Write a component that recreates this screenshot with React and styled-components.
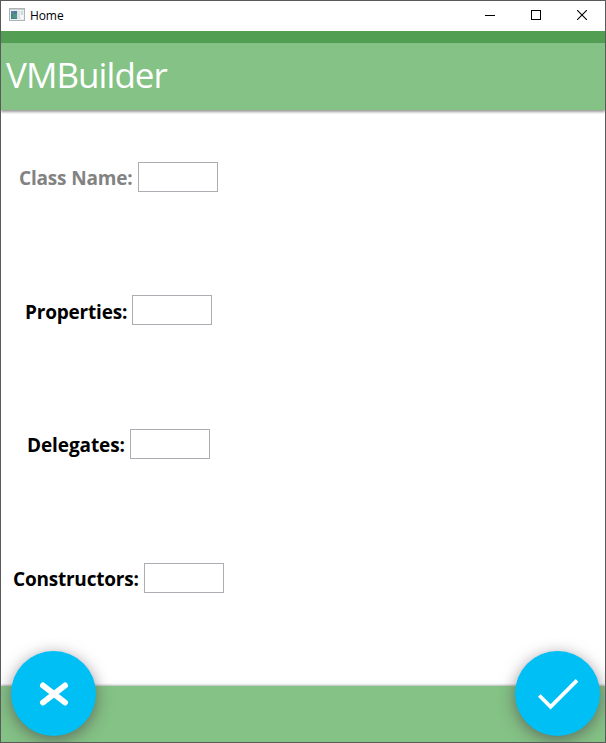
import React from "react";
import styled, { createGlobalStyle } from "styled-components";

const GlobalStyle = createGlobalStyle`
  * { box-sizing: border-box; }
  body { margin: 0; background: #fff; overflow: hidden; }
`;

const Window = styled.div`
  width: 606px;
  height: 743px;
  border: 1px solid #5b595c;
  background: #fff;
  display: flex;
  flex-direction: column;
  overflow: hidden;
  font-family: "Open Sans", "Noto Sans", sans-serif;
`;

const TitleBar = styled.div`
  height: 30px;
  flex: none;
  display: flex;
  align-items: center;
  padding-left: 8px;

  > svg { margin-bottom: 2px; }
`;

const WindowTitle = styled.span`
  flex: 1;
  margin-left: 5px;
  font-size: 12px;
  line-height: 16px;
  letter-spacing: -0.1px;
  color: #000;
`;

const CaptionButton = styled.button`
  width: 46px;
  height: 30px;
  flex: none;
  padding: 0 0 2px;
  border: 0;
  background: transparent;
  display: flex;
  align-items: center;
  justify-content: center;
`;

const StatusStrip = styled.div`
  height: 12px;
  flex: none;
  background: #529e53;
`;

const Header = styled.header`
  height: 67px;
  flex: none;
  display: flex;
  align-items: center;
  padding: 0 0 3px 5px;
  background: #84c285;
  box-shadow: 0 1.5px 2.5px rgba(0, 0, 0, 0.4);
`;

const AppName = styled.h1`
  margin: 0;
  font-size: 35px;
  font-weight: 400;
  line-height: 48px;
  letter-spacing: -0.95px;
  color: #fff;
`;

const Form = styled.main`
  flex: 1;
  width: 235px;
  display: grid;
  grid-template-rows: repeat(4, 133.6px);
`;

const Field = styled.label`
  display: flex;
  align-items: center;
  justify-content: center;
  color: ${(p) => (p.$muted ? "#828282" : "#000")};
`;

const FieldName = styled.span`
  width: ${(p) => p.$width}px;
  padding-top: ${(p) => p.$drop || 2}px;
  font-size: 19px;
  font-weight: 700;
  line-height: 28px;
  letter-spacing: ${(p) => p.$tracking}px;
  white-space: nowrap;
`;

const TextBox = styled.input`
  width: 80px;
  height: 30px;
  flex: none;
  padding: 0 4px;
  border: 1px solid #abadb3;
  border-radius: 0;
  outline: 0;
  background: #fff;
`;

const Footer = styled.footer`
  height: 56px;
  flex: none;
  display: flex;
  align-items: flex-end;
  justify-content: space-between;
  padding: 0 5px 6px 10px;
  background: #84c285;
  box-shadow: 0 -1px 2px rgba(0, 0, 0, 0.3);
`;

const RoundButton = styled.button`
  width: 85px;
  height: 85px;
  flex: none;
  padding: 0;
  border: 0;
  border-radius: 50%;
  background: #00bff5;
  box-shadow: 0 4px 16px rgba(70, 55, 70, 0.6);

  svg { display: block; }
`;

const fields = [
  { name: "Class Name:", width: 119, tracking: -0.18, muted: true },
  { name: "Properties:", width: 107, tracking: -0.2, drop: 3 },
  { name: "Delegates:", width: 103, tracking: -0.1 },
  { name: "Constructors:", width: 131, tracking: -0.22 },
];

function AppIcon() {
  return (
    <svg width="16" height="14" viewBox="0 0 16 14" shapeRendering="crispEdges">
      <rect x="0.5" y="0.5" width="15" height="12" fill="#eceff2" stroke="#aeb3b8" />
      <rect x="1" y="1" width="14" height="1" fill="#c9ced3" />
      <rect x="2" y="3" width="6" height="8" fill="#49808f" />
      <rect x="2" y="3" width="3" height="3" fill="#607fa5" />
      <rect x="4" y="6" width="4" height="4" fill="#4b9a80" />
      <rect x="8" y="3" width="3" height="8" fill="#dce1e6" />
      <rect x="12" y="3" width="2" height="4" fill="#c7dfda" />
      <rect x="12" y="7" width="2" height="4" fill="#fafafa" />
    </svg>
  );
}

export default function App() {
  return (
    <>
      <GlobalStyle />
      <Window>
        <TitleBar>
          <AppIcon />
          <WindowTitle>Home</WindowTitle>
          <CaptionButton aria-label="Minimize">
            <svg width="10" height="10" shapeRendering="crispEdges">
              <path d="M0 5.5H10" stroke="#000" />
            </svg>
          </CaptionButton>
          <CaptionButton aria-label="Maximize">
            <svg width="10" height="10" shapeRendering="crispEdges">
              <rect x="0.5" y="0.5" width="9" height="9" fill="none" stroke="#000" />
            </svg>
          </CaptionButton>
          <CaptionButton aria-label="Close">
            <svg width="10" height="10">
              <path d="M0 0L10 10M10 0L0 10" stroke="#000" strokeWidth="1.1" />
            </svg>
          </CaptionButton>
        </TitleBar>
        <StatusStrip />
        <Header>
          <AppName>VMBuilder</AppName>
        </Header>
        <Form>
          {fields.map((f) => (
            <Field key={f.name} $muted={f.muted}>
              <FieldName $width={f.width} $tracking={f.tracking} $drop={f.drop}>{f.name}</FieldName>
              <TextBox />
            </Field>
          ))}
        </Form>
        <Footer>
          <RoundButton aria-label="Cancel">
            <svg width="85" height="85">
              <path d="M32 34.5L54 51.5M54 34.5L32 51.5" stroke="#fff" strokeWidth="6" strokeLinecap="round" />
            </svg>
          </RoundButton>
          <RoundButton aria-label="Confirm">
            <svg width="85" height="85">
              <path d="M24.3 44.5L35.6 55.8L62 29.4" fill="none" stroke="#fff" strokeWidth="3.8" />
            </svg>
          </RoundButton>
        </Footer>
      </Window>
    </>
  );
}
